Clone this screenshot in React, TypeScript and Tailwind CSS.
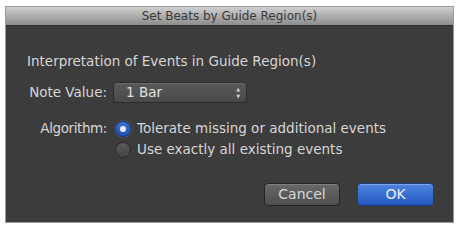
import React from 'react';

const Radio = ({ checked }: { checked?: boolean }) =>
  checked ? (
    <span className="w-[16px] h-[16px] shrink-0 rounded-full bg-gradient-to-b from-[#3f74d6] to-[#1d4fb5] border border-[#1a3a80] flex items-center justify-center shadow-[0_0_2px_rgba(120,160,255,0.6)]">
      <span className="w-[6px] h-[6px] rounded-full bg-[#e8f0ff]" />
    </span>
  ) : (
    <span className="w-[16px] h-[16px] shrink-0 rounded-full bg-gradient-to-b from-[#5a5959] to-[#454444] border border-[#2a2929]" />
  );

export default function App() {
  return (
    <div className="w-[459px] h-[226px] bg-white pl-[5px] pr-[5px] pt-[6px] pb-[3px] font-['DejaVu_Sans',Verdana,sans-serif]">
      <div className="w-full h-full flex flex-col bg-[#3d3c3c] border border-[#9a9a9a]">
        {/* title bar */}
        <div className="h-[19px] flex items-center justify-center bg-gradient-to-b from-[#cfcfcf] to-[#8d8d8d] border-b border-[#2a2a2a] text-[12px] text-[#3a3a3a]">
          Set Beats by Guide Region(s)
        </div>

        <div className="flex flex-col pl-[21px] pt-[25px] text-[13.5px] text-[#d6d6d6]">
          <div className="h-[20px] flex items-center">Interpretation of Events in Guide Region(s)</div>

          <div className="grid grid-cols-[80px_1fr] gap-x-[6px] mt-[11px]">
            <span className="h-[21px] flex items-center justify-end">Note Value:</span>
            <div className="w-[134px] h-[21px] flex items-center justify-between pl-[12px] pr-[6px] rounded-[4px] bg-gradient-to-b from-[#5a5959] to-[#4a4949] border border-[#2c2b2b] shadow-[inset_0_1px_0_rgba(255,255,255,0.12)] text-[#e0e0e0]">
              <span>1 Bar</span>
              <span className="flex flex-col items-center gap-[2px] text-[5px] leading-[5px] text-[#cfcfcf]">
                <span>▲</span>
                <span>▼</span>
              </span>
            </div>

            <span className="h-[21px] flex items-center justify-end mt-[15px] tracking-[-0.4px]">Algorithm:</span>
            <div className="flex flex-col mt-[15px] pl-[2px]">
              <label className="h-[21px] flex items-center gap-[6px]">
                <Radio checked />
                <span>Tolerate missing or additional events</span>
              </label>
              <label className="h-[21px] flex items-center gap-[6px]">
                <Radio />
                <span>Use exactly all existing events</span>
              </label>
            </div>
          </div>

          <div className="flex justify-end gap-[17px] mt-[23px] pr-[19px]">
            <button className="w-[76px] h-[23px] rounded-[4px] bg-gradient-to-b from-[#6a6969] to-[#4e4d4d] border border-[#262525] text-[14px] text-[#d8d8d8] shadow-[inset_0_1px_0_rgba(255,255,255,0.15)]">
              Cancel
            </button>
            <button className="w-[77px] h-[23px] rounded-[4px] bg-gradient-to-b from-[#4f86e0] to-[#2457bd] border border-[#1a3c85] text-[14px] text-[#e8eefb] shadow-[inset_0_1px_0_rgba(255,255,255,0.25)]">
              OK
            </button>
          </div>
        </div>
      </div>
    </div>
  );
}
